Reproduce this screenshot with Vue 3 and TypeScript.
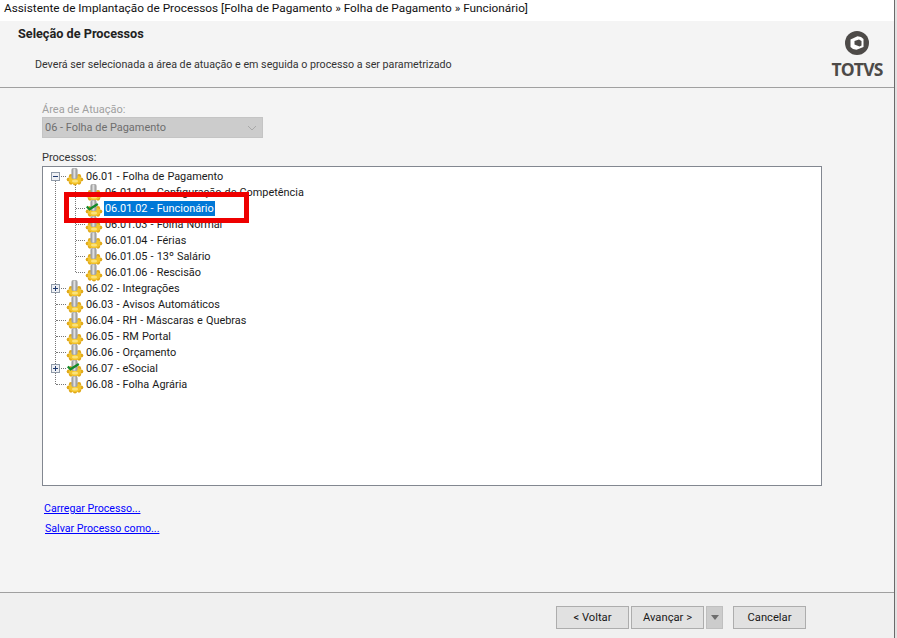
<script setup lang="ts">
interface Row { text: string; depth: number; expander?: string; check?: boolean; selected?: boolean }
const rows: Row[] = [
  { text: '06.01 - Folha de Pagamento', depth: 0, expander: 'minus' },
  { text: '06.01.01 - Configuração de Competência', depth: 1 },
  { text: '06.01.02 - Funcionário', depth: 1, check: true, selected: true },
  { text: '06.01.03 - Folha Normal', depth: 1 },
  { text: '06.01.04 - Férias', depth: 1 },
  { text: '06.01.05 - 13º Salário', depth: 1 },
  { text: '06.01.06 - Rescisão', depth: 1 },
  { text: '06.02 - Integrações', depth: 0, expander: 'plus' },
  { text: '06.03 - Avisos Automáticos', depth: 0 },
  { text: '06.04 - RH - Máscaras e Quebras', depth: 0 },
  { text: '06.05 - RM Portal', depth: 0 },
  { text: '06.06 - Orçamento', depth: 0 },
  { text: '06.07 - eSocial', depth: 0, expander: 'plus', check: true },
  { text: '06.08 - Folha Agrária', depth: 0 },
]
const lobes: [number, number][] = [[2.8, 12.5], [5, 9.2], [13, 9.2], [15.2, 12.5], [5, 15.6], [9, 16.4], [13, 15.6]]
</script>

<template>
  <div class="window">
    <div class="frame">
      <div class="titlebar">Assistente de Implantação de Processos [Folha de Pagamento » Folha de Pagamento » Funcionário]</div>
      <div class="panel">
        <header class="head">
          <div class="head-text">
            <h1>Seleção de Processos</h1>
            <p>Deverá ser selecionada a área de atuação e em seguida o processo a ser parametrizado</p>
          </div>
          <div class="logo">
            <svg width="26" height="26" viewBox="0 0 26 26">
              <circle cx="13" cy="13" r="12" fill="#4d4a48" />
              <path d="M6.5 9.5 13.5 6.2Q17.5 6.5 19.5 9V17L12.500 19.800Q8.500 19.500 6.500 17Z" fill="#fff" />
              <path d="M10.500 11 15 9.500 17.500 11V15.500L15.500 16.500 10.500 14.500Z" fill="#4d4a48" />
            </svg>
            <span>TOTVS</span>
          </div>
        </header>
        <main class="body">
          <label class="disabled-label">Área de Atuação:</label>
          <div class="select">
            <span>06 - Folha de Pagamento</span>
            <svg width="10" height="6" viewBox="0 0 10 6"><path d="M1 1l4 4 4-4" fill="none" stroke="#a8a8a8" /></svg>
          </div>
          <label class="proc-label">Processos:</label>
          <div class="tree">
            <div class="guide guide-root"></div>
            <div class="guide guide-child"></div>
            <div v-for="row in rows" :key="row.text" class="row" :class="'depth' + row.depth">
              <span class="stub"></span>
              <span v-if="row.expander" class="expander">
                <svg width="9" height="9" viewBox="0 0 9 9">
                  <rect x=".5" y=".5" width="8" height="8" fill="#eef0f4" stroke="#8f9aa8" />
                  <path d="M2 4.500h5" stroke="#1f3a6e" />
                  <path v-if="row.expander === 'plus'" d="M4.500 2v5" stroke="#1f3a6e" />
                </svg>
              </span>
              <svg class="icon" width="18" height="18" viewBox="0 0 18 18">
                <circle v-for="(l, i) in lobes" :key="i" :cx="l[0]" :cy="l[1]" r="2.100" fill="#e0a818" />
                <ellipse cx="9" cy="12.500" rx="6.200" ry="4.600" fill="#f3c52c" />
                <ellipse cx="9" cy="14" rx="3" ry="1.600" fill="#fbe27a" />
                <rect x="5.400" y="1" width="6.200" height="11" rx="2" fill="#a3a3a3" />
                <rect x="7.400" y="1.500" width="2" height="10" fill="#e0e0e0" />
                <path v-if="row.check" d="M1.800 7.500 4.500 10.200 12.800 5" fill="none" stroke="#128a2a" stroke-width="2.300" />
              </svg>
              <span class="label" :class="{ selected: row.selected }">{{ row.text }}</span>
            </div>
            <div class="highlight"></div>
          </div>
          <a class="link first">Carregar Processo...</a>
          <a class="link second">Salvar Processo como...</a>
        </main>
        <footer class="foot">
          <button>&lt; Voltar</button>
          <button class="next">Avançar &gt;</button>
          <span class="drop"><i></i></span>
          <button class="cancel">Cancelar</button>
        </footer>
      </div>
    </div>
  </div>
</template>

<style>
html, body { margin: 0; background: #fff; }
</style>

<style scoped>
.window {
  width: 897px;
  height: 638px;
  overflow: hidden;
  font: 11px/16px "Roboto", "Liberation Sans", sans-serif;
  color: #1a1a1a;
  background: #e2e2e2;
}
.frame {
  width: 894px;
  height: 638px;
  display: flex;
  flex-direction: column;
  border-right: 1px solid #6a6a6a;
}
.titlebar { height: 21px; flex: none; padding-left: 4px; font-size: 11.800px; line-height: 16px; color: #111; white-space: nowrap; background: #fff; }
.panel {
  flex: 1;
  display: flex;
  flex-direction: column;
  background: #f4f4f4;
  min-height: 0;
}
.head {
  height: 67px;
  box-sizing: border-box;
  display: flex;
  justify-content: space-between;
  border-bottom: 1px solid #a0a0a0;
  flex: none;
}
.head-text { padding-left: 18px; }
h1 { margin: 5px 0 0; font-size: 12.700px; line-height: 16px; font-weight: 700; color: #222; }
p { margin: 15px 0 0 17px; font-size: 10.700px; color: #333; }
.logo { width: 54px; margin-right: 10px; padding-top: 9px; display: flex; flex-direction: column; align-items: center; }
.logo span { font: 700 17.500px/18px "Open Sans", "Liberation Sans", sans-serif; color: #4d4a48; letter-spacing: -.8px; margin-top: 4px; }
.body { flex: 1; padding: 14px 0 0 42px; display: flex; flex-direction: column; align-items: flex-start; min-height: 0; }
.disabled-label { height: 16px; color: #a0a0a0; font-size: 11px; }
.select {
  width: 221px;
  height: 21px;
  margin-top: -1px;
  padding: 1px 5px 0 2px;
  box-sizing: border-box;
  display: flex;
  align-items: center;
  justify-content: space-between;
  background: #cccccc;
  border: 1px solid #c4c4c4;
  color: #6e6e6e;
  font-size: 10.950px;
}
.proc-label { height: 16px; margin-top: 12px; color: #333; font-size: 11px; }
.tree {
  position: relative;
  width: 778px;
  height: 317px;
  padding-top: 1px;
  background: #fff;
  border: 1px solid #828790;
  flex: none;
}
.row { height: 16px; display: flex; align-items: center; position: relative; color: #1a1a1a; }
.depth0 { padding-left: 23px; }
.depth1 { padding-left: 42px; }
.stub { position: absolute; top: 8px; height: 0; border-top: 1px dotted #777; }
.depth0 .stub { left: 13px; width: 10px; }
.depth1 .stub { left: 33px; width: 9px; }
.expander { position: absolute; left: 8px; top: 4px; display: block; line-height: 0; z-index: 1; }
.icon { flex: none; margin-right: 1px; overflow: visible; }
.label { padding: 0 1px; font-size: 10.900px; word-spacing: .4px; line-height: 15px; white-space: nowrap; }
.label.selected { background: #0078d7; color: #fff; }
.guide { position: absolute; width: 0; border-left: 1px dotted #777; }
.guide-root { left: 12px; top: 9px; height: 208px; }
.guide-child { left: 32px; top: 17px; height: 88px; }
.highlight {
  position: absolute;
  left: 21px;
  top: 25px;
  width: 185px;
  height: 31px;
  box-sizing: border-box;
  border: 5px solid #ee0000;
}
.link { color: #0000ff; text-decoration: underline; font-size: 10.650px; cursor: pointer; }
.first { margin: 15px 0 0 2px; }
.second { margin: 4px 0 0 3px; }
.foot {
  height: 46px;
  flex: none;
  box-sizing: border-box;
  padding: 13px 0 0 556px;
  display: flex;
  align-items: flex-start;
  background: #f0f0f0;
  border-top: 1px solid #a0a0a0;
}
button {
  width: 73px;
  height: 23px;
  padding: 0;
  background: #e1e1e1;
  border: 1px solid #adadad;
  font: 11.200px/16px "Roboto", "Liberation Sans", sans-serif;
  color: #1a1a1a;
}
.next { margin-left: 2px; }
.drop { width: 17px; height: 23px; margin-left: 2px; background: #cccccc; border: 1px solid #bfbfbf; box-sizing: border-box; display: flex; justify-content: center; padding-top: 8px; }
.drop i { width: 0; height: 0; border: 4px solid transparent; border-top: 5px solid #6d6d6d; }
.cancel { margin-left: 10px; }
</style>
